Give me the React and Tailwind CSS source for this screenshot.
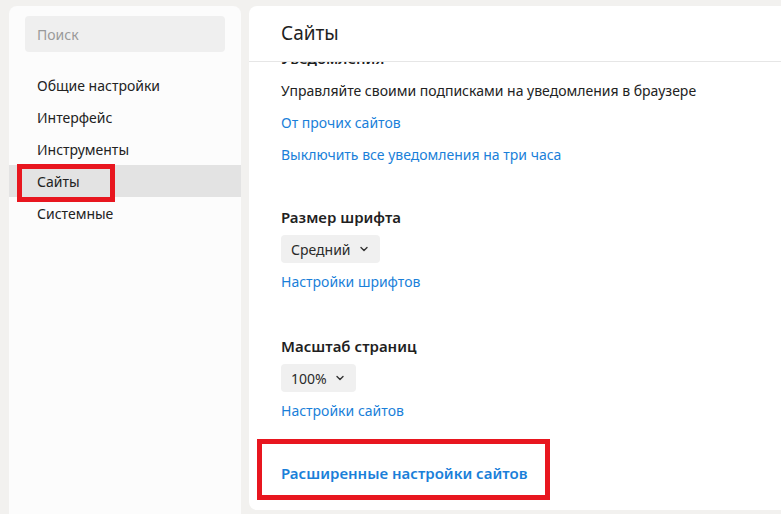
import React from "react";

function Chevron() {
  return (
    <svg width="8" height="6" viewBox="0 0 8 6" className="ml-[9px]">
      <polyline points="1,1.5 4,4.5 7,1.5" fill="none" stroke="#333" strokeWidth="1.4" strokeLinecap="round" strokeLinejoin="round" />
    </svg>
  );
}

function Row({ children, className = "" }) {
  return <div className={"h-[32px] flex items-center " + className}>{children}</div>;
}

function Link({ children }) {
  return <Row><span className="text-[#1a7fd9] cursor-pointer">{children}</span></Row>;
}

function Heading({ children }) {
  return <Row><span className="font-semibold text-[15px] text-[#1f1f1f]">{children}</span></Row>;
}

function Select({ children }) {
  return (
    <Row>
      <div className="h-[28px] flex items-center pl-[10px] pr-[12px] rounded-[4px] bg-[#f0f0f0] text-[#2a2a2a]">
        <span>{children}</span>
        <Chevron />
      </div>
    </Row>
  );
}

export default function App() {
  const nav = ["Общие настройки", "Интерфейс", "Инструменты", "Сайты", "Системные"];
  return (
    <div
      className="w-[781px] h-[514px] overflow-hidden bg-[#f2f1ef] flex gap-[8px] pl-[9px] pt-[6px] text-[14px] text-[#222]"
      style={{ fontFamily: '"Noto Sans", "Open Sans", sans-serif' }}
    >
      <aside className="w-[232px] shrink-0 h-[520px] bg-[#fcfcfc] rounded-t-[8px] pt-[10px]">
        <div className="mx-[16px] h-[36px] rounded-[4px] bg-[#efefef] flex items-center pl-[12px] text-[#9a9a9a]">
          Поиск
        </div>
        <nav className="mt-[17px] flex flex-col">
          {nav.map((n) => (
            <div
              key={n}
              className={
                "relative h-[32px] flex items-center pl-[28px] " +
                (n === "Сайты" ? "bg-[#e3e3e3]" : "")
              }
            >
              {n}
              {n === "Сайты" && (
                <div className="absolute left-[8px] top-[-1px] w-[98px] h-[38px] border-[5px] border-[#e8161f]" />
              )}
            </div>
          ))}
        </nav>
      </aside>

      <main className="flex-1 min-w-0 h-[504px] bg-white rounded-[8px] flex flex-col overflow-hidden mr-[-12px]">
        <header className="h-[56px] shrink-0 border-b border-[#e6e6e6] flex items-center pl-[32px] text-[19px] text-[#1f1f1f]">
          Сайты
        </header>
        <div className="flex-1 overflow-hidden pl-[32px]">
          <div className="mt-[-20px]">
            <Heading>Уведомления</Heading>
            <Row>Управляйте своими подписками на уведомления в браузере</Row>
            <Link>От прочих сайтов</Link>
            <Link>Выключить все уведомления на три часа</Link>

            <div className="mt-[31px]">
              <Heading>Размер шрифта</Heading>
              <Select>Средний</Select>
              <Link>Настройки шрифтов</Link>
            </div>

            <div className="mt-[33px]">
              <Heading>Масштаб страниц</Heading>
              <Select>100%</Select>
              <Link>Настройки сайтов</Link>
            </div>

            <div className="mt-[31px] relative">
              <Row>
                <span className="text-[#1a7fd9] text-[15px] font-semibold cursor-pointer">Расширенные настройки сайтов</span>
              </Row>
              <div className="absolute left-[-24px] w-[293px] top-[-18px] bottom-[-11px] border-[5px] border-[#e8161f]" />
            </div>
          </div>
        </div>
      </main>
    </div>
  );
}
